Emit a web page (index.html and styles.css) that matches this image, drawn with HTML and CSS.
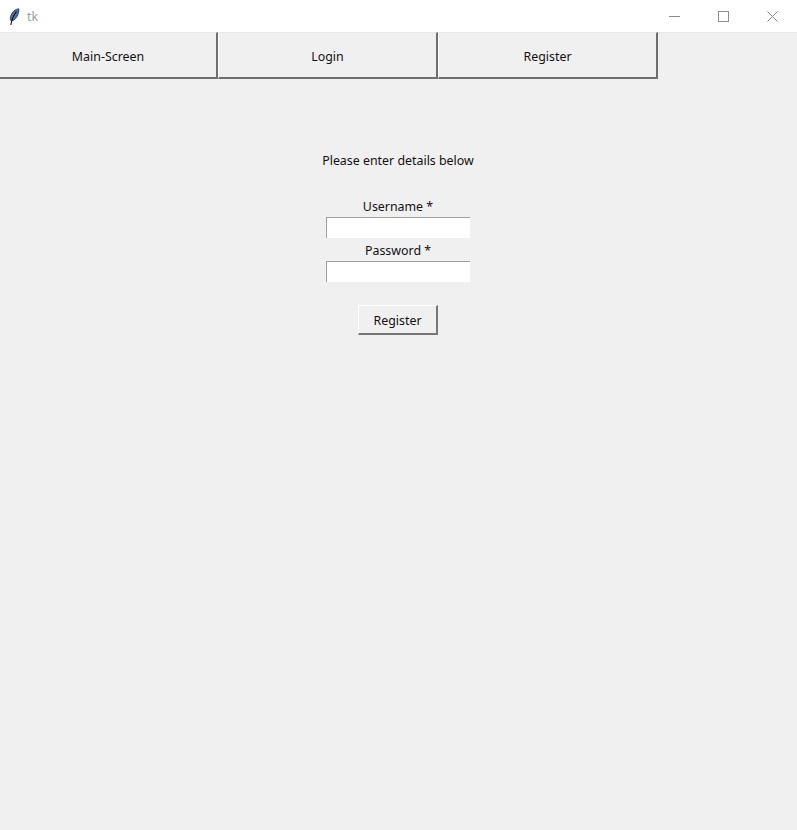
FILE: index.html
```
<!DOCTYPE html>
<html lang="en">
<head>
<meta charset="utf-8">
<title>tk</title>
<link rel="stylesheet" href="styles.css">
</head>
<body>
<header class="titlebar">
  <div class="title">
    <svg class="feather" width="12" height="18" viewBox="0 0 12 18">
      <path d="M10.800 .8 C7.500 1 3.800 4 2.600 8.500 C2.100 10.500 2.300 12.300 3.300 13 C6.500 12.500 9 9.500 10.200 5.800 C10.800 3.800 11 2 10.800 .8 Z" fill="#4a74a8" stroke="#1c2c48" stroke-width=".8"/>
      <path d="M8.500 3.500 C6 6.500 4 10.500 2.800 17" fill="none" stroke="#0b0f18" stroke-width="1.100"/>
    </svg>
    <span class="title-text">tk</span>
  </div>
  <div class="controls">
    <svg class="ctl ctl-min" width="11" height="11" viewBox="0 0 11 11"><path d="M0 5.500H11" stroke="#8c8c8c"/></svg>
    <svg class="ctl ctl-max" width="11" height="11" viewBox="0 0 11 11"><rect x=".5" y=".5" width="10" height="10" fill="none" stroke="#8c8c8c"/></svg>
    <svg class="ctl ctl-close" width="11" height="11" viewBox="0 0 11 11"><path d="M.5 .5L10.500 10.500M10.500 .5L.5 10.500" stroke="#8c8c8c"/></svg>
  </div>
</header>
<nav class="tabs">
  <button class="tab tab-first">Main-Screen</button>
  <button class="tab">Login</button>
  <button class="tab">Register</button>
</nav>
<main class="form">
  <p class="intro">Please enter details below</p>
  <label class="field-label field-label-first">Username *</label>
  <div class="entry"></div>
  <label class="field-label">Password *</label>
  <div class="entry"></div>
  <button class="submit">Register</button>
</main>
</body>
</html>
```
FILE: styles.css
```
* { box-sizing: border-box; }
html, body { margin: 0; height: 100%; }
body {
  background: #f0f0f0;
  color: #111;
  font-family: "Noto Sans", "Open Sans", sans-serif;
  font-size: 12.4px;
  overflow: hidden;
}
.titlebar {
  height: 32px;
  background: #fff;
  display: flex;
  align-items: center;
  justify-content: space-between;
}
.title { display: flex; align-items: center; padding-left: 8px; gap: 7px; margin-top: 1px; }
.title-text { color: #a0a0a0; font-size: 12.4px; opacity: .99; }
.controls { display: flex; align-items: center; padding-right: 19px; gap: 38px; margin-top: 0; }
.tabs { display: flex; height: 47px; border-top: 1px solid #e8e8e8; }
.tab {
  width: 220px;
  height: 47px;
  margin-top: -1px;
  padding: 2px 0 0;
  font: inherit;
  color: inherit;
  background: #f0f0f0;
  border: none;
  border-top: 1px solid #e8e8e8;
  border-right: 2px solid #6e6e6e;
  border-bottom: 2px solid #6e6e6e;
  border-left: 1px solid #fff;
}
.tab-first { width: 218px; border-left: none; }
.form { display: flex; flex-direction: column; align-items: center; padding-right: 1px; }
.intro { margin: 72px 0 0; height: 18px; line-height: 20px; }
.field-label { display: block; height: 19px; line-height: 18px; margin-top: 4px; }
.field-label-first { margin-top: 29px; }
.entry {
  width: 144px;
  height: 21px;
  background: #fff;
  border-top: 1px solid #a0a0a0;
  border-left: 1px solid #a0a0a0;
}
.submit {
  margin-top: 23px;
  width: 80px;
  height: 30px;
  padding: 1px 0 0;
  font: inherit;
  color: inherit;
  background: #f0f0f0;
  border: none;
  border-top: 1px solid #fff;
  border-left: 1px solid #fff;
  border-right: 2px solid #777;
  border-bottom: 2px solid #777;
}
```
